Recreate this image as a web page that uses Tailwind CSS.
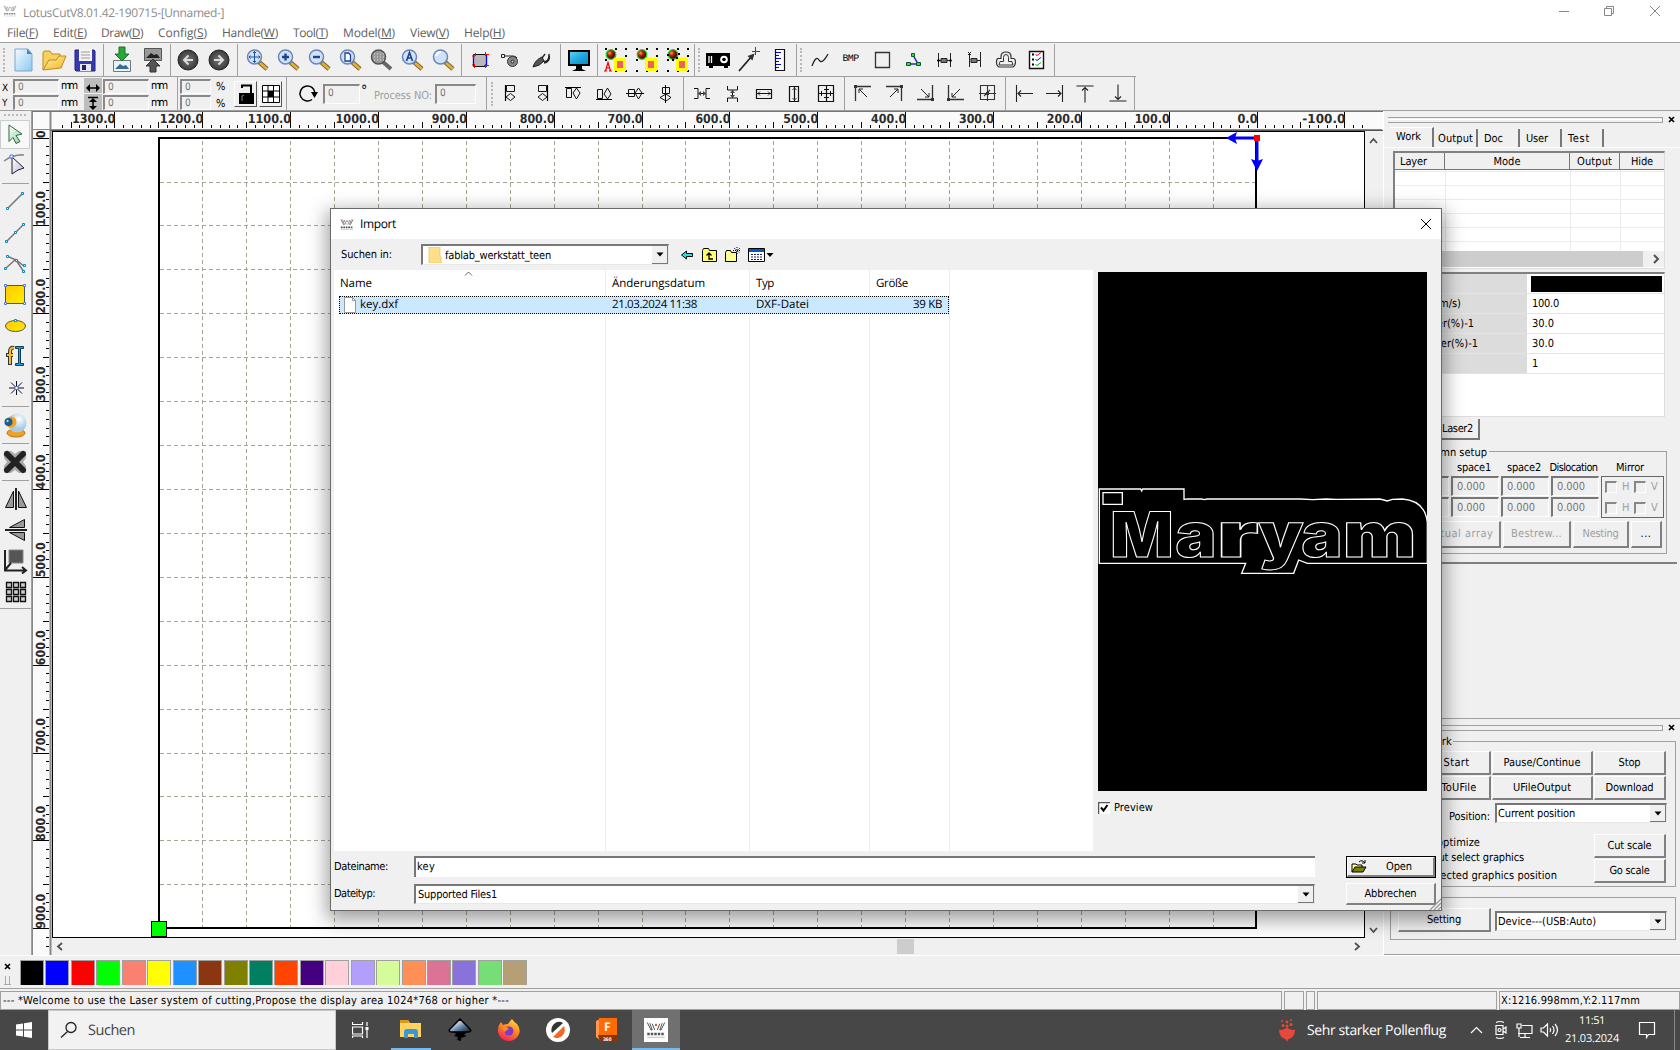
<!DOCTYPE html>
<html lang="de">
<head>
<meta charset="utf-8">
<title>LotusCutV8.01.42-190715-[Unnamed-]</title>
<script src="https://cdn.jsdelivr.net/npm/@tailwindcss/browser@4"></script>
</head>
<body class="w-[1680px] h-[1050px] overflow-hidden bg-[#f0f0f0] text-black font-['DejaVu_Sans_Condensed','DejaVu_Sans',sans-serif] text-[11px] leading-[14px] [text-rendering:geometricPrecision]">

<svg class="absolute w-0 h-0">
  <defs>
    <linearGradient id="gBlue" x1="0" y1="0" x2="1" y2="1"><stop offset="0" stop-color="#f4fbff"/><stop offset="1" stop-color="#8cc8f4"/></linearGradient>
    <linearGradient id="gYel" x1="0" y1="0" x2="1" y2="1"><stop offset="0" stop-color="#fff0a0"/><stop offset="1" stop-color="#f0b428"/></linearGradient>
    <linearGradient id="gGold" x1="0" y1="0" x2="1" y2="1"><stop offset="0" stop-color="#ffc800"/><stop offset="1" stop-color="#ffee00"/></linearGradient>
    <linearGradient id="gArr" x1="0" y1="0" x2="1" y2="1"><stop offset="0" stop-color="#fff"/><stop offset="1" stop-color="#8fcfa0"/></linearGradient>
    <linearGradient id="gLav" x1="0" y1="0" x2="1" y2="1"><stop offset="0" stop-color="#fff"/><stop offset="1" stop-color="#b4b8e0"/></linearGradient>
    <radialGradient id="gDark"><stop offset="0" stop-color="#777"/><stop offset="1" stop-color="#3a3a3a"/></radialGradient>
    <radialGradient id="gBall" cx=".35" cy=".35"><stop offset="0" stop-color="#ff9a6a"/><stop offset=".5" stop-color="#c02010"/><stop offset="1" stop-color="#501008"/></radialGradient>
    <radialGradient id="gCam" cx=".6" cy=".3"><stop offset="0" stop-color="#fff"/><stop offset="1" stop-color="#a8cce4"/></radialGradient>
    <linearGradient id="gMon" x1="0" y1="0" x2="1" y2="1"><stop offset="0" stop-color="#58d0f8"/><stop offset=".5" stop-color="#20a8e0"/><stop offset="1" stop-color="#1088c8"/></linearGradient>
    <linearGradient id="gFox" x1=".8" y1="0" x2=".3" y2="1"><stop offset="0" stop-color="#ffe040"/><stop offset=".5" stop-color="#ff8020"/><stop offset="1" stop-color="#f02060"/></linearGradient>
    <linearGradient id="gInk" x1="0" y1="0" x2="1" y2="1"><stop offset=".2" stop-color="#fff"/><stop offset=".6" stop-color="#6080a8"/><stop offset="1" stop-color="#101820"/></linearGradient>
  </defs>
  <symbol id="new" viewBox="0 0 28 28"><path d="M6 3h13l4 5v17H6z" fill="url(#gBlue)" stroke="#7aa6cc"/><path d="M18 3v5h5z" fill="#3f86cc"/></symbol>
  <symbol id="open" viewBox="0 0 28 28"><path d="M3 24V7q0-2 2-2h5l2 3h8v3" fill="#f8d060" stroke="#c08a18"/><path d="M3 24l6-10h7l3-4h7l-5 12z" fill="url(#gYel)" stroke="#c08a18"/></symbol>
  <symbol id="save" viewBox="0 0 28 28"><path d="M4 4h19l1 1v20H5l-1-1z" fill="#3a3ab0" stroke="#20207c"/><path d="M8 3h13v12H8z" fill="#f4f4f4"/><path d="M10 6h9M10 9h9M10 12h9" stroke="#999"/><path d="M9 18h11v7H9z" fill="#e8e8f0"/><path d="M11 19h4v5h-4z" fill="#20207c"/></symbol>
  <symbol id="imp" viewBox="0 0 28 28"><path d="M5.500 14.500h17v11h-17z" fill="#e8f4fc" stroke="#777"/><path d="M7 23l5-5 3 2 3-1 3 4z" fill="#3a6a90"/><path d="M11 1h6v7h4l-7 7-7-7h4z" fill="#28a838" stroke="#187028"/></symbol>
  <symbol id="exp" viewBox="0 0 28 28"><path d="M5.500 2.500h17v12h-17z" fill="#999" stroke="#555"/><path d="M7 12l5-5 3 2 3-1 3 4z" fill="#222"/><path d="M11 26h6v-6h4l-7-7-7 7h4z" fill="#555" stroke="#333"/></symbol>
  <symbol id="undo" viewBox="0 0 28 28"><circle cx="14" cy="14" r="10" fill="url(#gDark)" stroke="#222"/><path d="M19 14H10m4.500-4.500L10 14l4.500 4.500" stroke="#ddd" stroke-width="2" fill="none"/></symbol>
  <symbol id="redo" viewBox="0 0 28 28"><circle cx="14" cy="14" r="10" fill="url(#gDark)" stroke="#222"/><path d="M9 14h9m-4.500-4.500L18 14l-4.500 4.500" stroke="#ddd" stroke-width="2" fill="none"/></symbol>
  <symbol id="lens" viewBox="0 0 28 28"><path d="M16 16l8 7" stroke="#7a6440" stroke-width="4.500"/><path d="M17 17l7 6" stroke="#e8b030" stroke-width="2.500"/><circle cx="11.500" cy="11" r="7" fill="#cfe2fa" stroke="#6c86b8" stroke-width="1.500"/></symbol>
  <symbol id="zfit" viewBox="0 0 28 28"><use href="#lens"/><path d="M11.500 5.500v11M6 11h11M10 7l1.500-1.500L13 7M10 15l1.500 1.500L13 15M7.500 9.500L6 11l1.500 1.500M15.500 9.500L17 11l-1.500 1.500" stroke="#2050a0" fill="none"/></symbol>
  <symbol id="zin" viewBox="0 0 28 28"><use href="#lens"/><path d="M11.500 7.500v7M8 11h7" stroke="#1c4488" stroke-width="2.400"/></symbol>
  <symbol id="zout" viewBox="0 0 28 28"><use href="#lens"/><path d="M8 11h7" stroke="#1c4488" stroke-width="2.400"/></symbol>
  <symbol id="zpage" viewBox="0 0 28 28"><use href="#lens"/><path d="M9 7h3.500l2 2v6H9z" fill="#fff" stroke="#1c4488" stroke-width="1.300"/></symbol>
  <symbol id="zgrid" viewBox="0 0 28 28"><path d="M16 16l8 7" stroke="#666" stroke-width="4"/><circle cx="11.500" cy="11" r="7" fill="#999" stroke="#555" stroke-width="1.500"/><path d="M7 8h10M7 11h10M7 14h10" stroke="#ddd" stroke-dasharray="1 2"/></symbol>
  <symbol id="zall" viewBox="0 0 28 28"><use href="#lens"/><path d="M8.500 15l3-8.500 3 8.500M9.500 12h4" stroke="#1c4488" stroke-width="1.600" fill="none"/></symbol>
  <symbol id="zplain" viewBox="0 0 28 28"><use href="#lens"/><path d="M7 10q1-4 5-4" stroke="#fff" stroke-width="2" fill="none"/></symbol>
  <symbol id="cutbox" viewBox="0 0 28 28"><path d="M7.500 8.500h13v12h-13z" fill="#b8b8b8" stroke="#111"/><path d="M7.500 9v11M20.500 9v11" stroke="#00f" stroke-width="1.300"/><path d="M6 10h3M9.500 7v3M19.500 6v4M20 8.500h3M6 19h3M8.500 18v4M19.500 18v4M18 19.500h5" stroke="#f00"/></symbol>
  <symbol id="wheel" viewBox="0 0 28 28"><path d="M4.500 8.500h3v3h-3z" fill="none" stroke="#222"/><path d="M8 10h8q3 0 4 2" stroke="#222" fill="none"/><circle cx="15.500" cy="15.500" r="5" fill="#888" stroke="#333"/><circle cx="15.500" cy="15.500" r="1.500" fill="#ccc" stroke="#222"/></symbol>
  <symbol id="pen" viewBox="0 0 28 28"><path d="M5 21q2-7 9-10l2 4q-4 5-11 6z" fill="#555" stroke="#222"/><path d="M14 12l3-4M15 15q6 2 6-7M21 8q2 8-5 9" fill="none" stroke="#222" stroke-width="1.300"/></symbol>
  <symbol id="monitor" viewBox="0 0 28 28"><path d="M3 4h22v16H3z"/><path d="M5 6h18v12H5z" fill="url(#gMon)"/><path d="M11 20h6v3l4 2H7l4-2z"/></symbol>
  <symbol id="shapes" viewBox="0 0 28 28"><path d="M3 2h2v2H3zM13 2h2v2h-2zM23 2h2v2h-2zM3 13h2v2H3zM23 9h2v2h-2zM3 24h2v2H3zM13 24h2v2h-2zM23 24h2v2h-2z"/><circle cx="9" cy="8.500" r="4.800" fill="url(#gBall)" stroke="#28c828" stroke-width="1.300"/><path d="M13.500 13.500h9v10h-9z" fill="#f06060" stroke="#ff0" stroke-width="3"/></symbol>
  <symbol id="shapesA" viewBox="0 0 28 28"><use href="#shapes"/><path d="M2 15h8v12H2z" fill="#f0f0f0"/><path d="M3.500 25L6 16.500 8.500 25M4.500 22h3M2 25h3M7 25h3" stroke="#e00" stroke-width="1.200" fill="none"/></symbol>
  <symbol id="shapesB" viewBox="0 0 28 28"><use href="#shapes"/><path d="M12 11h2v2h-2zM3 8h2v2H3zM8 13h2v2H8zM14 7h2v2h-2z"/></symbol>
  <symbol id="proj" viewBox="0 0 28 28"><path d="M2 7h24v13h-2v2h-4v-2H9v2H5v-2H2z"/><path d="M5 10v7M7.500 10v7" stroke="#fff" stroke-width="1.300"/><circle cx="20" cy="13.500" r="3.800" fill="#fff"/><circle cx="20" cy="13.500" r="1.800"/></symbol>
  <symbol id="ptr" viewBox="0 0 28 28"><path d="M4 25L17 10" stroke="#222" stroke-width="1.800"/><path d="M19.500 7.500l-2 7-5-4.500z" fill="#333"/><path d="M20.500 1v8M17 5.500h8" stroke="#444"/></symbol>
  <symbol id="rule" viewBox="0 0 28 28"><path d="M9.500 3.500h9v21h-9z" fill="#fff" stroke="#111" stroke-width="1.200"/><path d="M10 6.500h5M10 9.500h3M10 12.500h5M10 15.500h3M10 18.500h5M10 21.500h3" stroke="#00e"/></symbol>
  <symbol id="curve" viewBox="0 0 28 28"><path d="M6 20q4-11 7-6t9-6" fill="none" stroke="#222" stroke-width="1.300"/></symbol>
  <symbol id="rect" viewBox="0 0 28 28"><path d="M7.500 6.500h14v15h-14z" fill="none" stroke="#333" stroke-width="1.300"/></symbol>
  <symbol id="nodes" viewBox="0 0 28 28"><path d="M14 9l5 9H8" stroke="#22d" stroke-width="1.500" fill="none"/><path d="M12.500 7.500h3v3h-3zM7.500 16.500h4v3h-4zM17.500 16.500h4v3h-4z" fill="#2e2" stroke="#153"/></symbol>
  <symbol id="distA" viewBox="0 0 28 28"><path d="M8.500 7v14M20.500 7v14M7 14.500h14" stroke="#222"/><path d="M11 12.500h6v4h-6z" fill="#777" stroke="#222"/><path d="M7 14.500l1.500-2 1.500 2-1.500 2zM19 14.500l1.500-2 1.500 2-1.500 2z"/></symbol>
  <symbol id="distB" viewBox="0 0 28 28"><path d="M8.500 8v13M19.500 6v15M7 6l3 3M10 6L7 9" stroke="#222"/><path d="M10 12.500h6v4h-6z" fill="#777" stroke="#222"/><path d="M16 14.500h3" stroke="#222"/></symbol>
  <symbol id="stamp" viewBox="0 0 28 28"><path d="M9 10.500q0-4.500 5-4.500t5 4.500v2h2q2.500 0 2.500 3.500t-2.500 5H7q-2.500-1-2.500-5t2.500-3.500h2z" fill="none" stroke="#333" stroke-width="1.200"/><path d="M7 19l1-3.500h3.500v-4q0-3 2.500-3t2.500 3v4H20l1 3.500z" fill="none" stroke="#333"/></symbol>
  <symbol id="list" viewBox="0 0 28 28"><path d="M6.500 5.500h14v17h-14z" fill="#fff" stroke="#111" stroke-width="1.400"/><path d="M9 8.500h2M9 13.500h2M9 18.500h2" stroke="#000" stroke-width="2"/><path d="M12.500 8.500l1.500 1 4-3" fill="none" stroke="#e00"/><path d="M12.500 13.500l1.500 1 4-3" fill="none" stroke="#00e"/><path d="M12.500 18.500l1.500 1 4-3" fill="none" stroke="#0a0"/></symbol>
  <symbol id="al" viewBox="0 0 28 28"><path d="M8.500 6v16" stroke="#000" stroke-width="1.200"/><path d="M9.500 6.500h8v6h-8zM9 18l4.500-3.500L18 18l-4.500 3.500z" fill="none" stroke="#111"/></symbol>
  <symbol id="at" viewBox="0 0 28 28"><path d="M6 8.500h16" stroke="#000"/><path d="M7.500 9.500h5v9h-5zM17.500 9l3.500 5-3.500 6-3.500-6z" fill="none" stroke="#111"/></symbol>
  <symbol id="ac" viewBox="0 0 28 28"><path d="M5 14.500h18" stroke="#000"/><path d="M7.500 10.500h6v7h-6zM17.500 9l3.500 5-3.500 6-3.500-6z" fill="none" stroke="#111"/></symbol>
  <symbol id="sp" viewBox="0 0 28 28"><path d="M6 9.500h4v10H6M22 9.500h-4v10h4M10 14.500h8" fill="none" stroke="#111"/><path d="M13 12v5l-3-2.500zM15 12v5l3-2.500z" fill="#444"/></symbol>
  <symbol id="same" viewBox="0 0 28 28"><path d="M6.500 10.500h15v9h-15zM6 14.500h16" fill="none" stroke="#111" stroke-width="1.200"/><path d="M10 12.500l-2 2 2 2M18 12.500l2 2-2 2" fill="none" stroke="#333"/></symbol>
  <symbol id="sameb" viewBox="0 0 28 28"><path d="M6.500 6.500h15v16h-15zM6 14.500h16M14.500 6v17" fill="none" stroke="#111" stroke-width="1.200"/><path d="M9.500 12v5M18.500 12v5M12 10.500h5M12 18.500h5" stroke="#111"/></symbol>
  <symbol id="cor" viewBox="0 0 28 28"><path d="M6.500 22V7.500H22" fill="none" stroke="#333" stroke-width="1.300"/><path d="M10 10l8 8M10 10v4M10 10h4" fill="none" stroke="#222"/><path d="M5 6h3v3H5z" fill="#333"/></symbol>
  <symbol id="cen" viewBox="0 0 28 28"><path d="M7.500 6.500h14v14h-14zM14.500 6v16M6 14.500h17M11 17l6-6" fill="none" stroke="#333" stroke-width="1.100"/><path d="M13 13h3v3h-3z" fill="#333"/></symbol>
  <symbol id="edge" viewBox="0 0 28 28"><path d="M6.500 6v17M8 14.500h15M11 11.500l-3 3 3 3" fill="none" stroke="#222" stroke-width="1.100"/></symbol>
  <symbol id="logo" viewBox="0 0 16 14"><path d="M1 1l3 6h1L3 1.500M5 2l2 5M11 2L9 7M15 1l-3 6h-1l2-5.500" fill="none" stroke="#555" stroke-width=".8"/><circle cx="8" cy="3" r="1" fill="#e06030"/><path d="M1 10.200h14" stroke="#555" stroke-width="2" stroke-dasharray="2 .8"/><path d="M1 12.800h14" stroke="#aaa" stroke-width=".6"/></symbol>
  <symbol id="tri" viewBox="0 0 8 5"><path d="M.5.500h7L4 4.500z"/></symbol>
</svg>

<div class="flex flex-col w-[1680px] h-[1050px]">

  <!-- title bar and menu -->
  <header class="h-[43px] bg-white border-b border-[#a0a0a0] shrink-0 font-['Open_Sans',sans-serif] text-[12px]">
    <div class="h-[22px] flex items-center">
      <svg class="w-[14px] h-[12px] ml-[3px] opacity-70"><use href="#logo"/></svg>
      <span class="ml-[6px] mt-[3px] text-[#8c8c8c]" data-w="201">LotusCutV8.01.42-190715-[Unnamed-]</span>
      <svg class="ml-auto w-[108px] h-[14px] mr-[17px]" viewBox="0 0 108 14" fill="none" stroke="#888"><path d="M4 7.500h10M49.500 4.500h7v7h-7zM51.500 4V2.500h7v7H57M95 2l10 10M105 2L95 12"/></svg>
    </div>
    <nav class="flex h-[20px] items-center text-[#606060] pl-[7px] pt-[2px]">
      <span class="w-[46px]"><span data-w="31">File(<u>F</u>)</span></span><span class="w-[48px]"><span data-w="34">Edit(<u>E</u>)</span></span><span class="w-[57px]"><span data-w="42">Draw(<u>D</u>)</span></span><span class="w-[64px]"><span data-w="49">Config(<u>S</u>)</span></span><span class="w-[71px]"><span data-w="56">Handle(<u>W</u>)</span></span><span class="w-[50px]"><span data-w="35">Tool(<u>T</u>)</span></span><span class="w-[67px]"><span data-w="52">Model(<u>M</u>)</span></span><span class="w-[54px]"><span data-w="39">View(<u>V</u>)</span></span><span><span data-w="41">Help(<u>H</u>)</span></span>
    </nav>
  </header>

  <!-- toolbars -->
  <div id="bar1" class="flex h-[33px] pt-[1px] items-center shrink-0 w-[1136px]"></div>
  <div class="flex h-[34px] items-center shrink-0 border-t border-[#a0a0a0] w-[1136px]">
    <div class="flex w-[484px] h-full items-center">
      <div class="w-[13px] pl-[2px] pt-[5px] text-[10px] leading-[15px] flex flex-col"><span>X</span><span>Y</span></div>
      <div class="w-[46px] pt-[2px] flex flex-col gap-px"><div class="fld">0</div><div class="fld">0</div></div>
      <div class="w-[25px] pl-[2px] pt-px text-[11px] leading-[17px] flex flex-col items-start"><span data-w="15">mm</span><span data-w="15">mm</span></div>
      <div class="w-[18px] h-[32px] bg-[#bdbdbd] flex flex-col"><svg class="w-[18px] h-[32px]" viewBox="0 0 18 32"><path d="M4 10h10" stroke="#000" stroke-width="1.500"/><path d="M2 10l4-4v8zM16 10l-4-4v8zM9 20l4 4H5zM9 32l4-4H5z"/><path d="M9 22v8M4 19.500h10" stroke="#000" stroke-width="1.500"/><path d="M0 15.500h18" stroke="#eee"/></svg></div>
      <div class="w-[47px] pl-px pt-[2px] flex flex-col gap-px"><div class="fld">0</div><div class="fld">0</div></div>
      <div class="w-[28px] pl-[2px] pt-px text-[11px] leading-[17px] flex flex-col items-start"><span data-w="15">mm</span><span data-w="15">mm</span></div>
      <div class="w-px h-full bg-[#a0a0a0]"></div>
      <div class="w-[33px] pl-[2px] pt-[2px] flex flex-col gap-px"><div class="fld">0</div><div class="fld">0</div></div>
      <div class="w-[23px] pl-[5px] pt-[2px] text-[11px] leading-[17px] flex flex-col"><span>%</span><span>%</span></div>
      <div class="w-[23px] h-[26px] mr-[2px] border border-t-white border-l-white border-r-[#555] border-b-[#555]"><svg class="w-[21px] h-[24px]" viewBox="0 0 21 24"><path d="M5 12h13v9H5z" stroke="#000" stroke-width="2"/><path d="M7 6V3.500h9V12" fill="none" stroke="#000" stroke-width="2"/><path d="M7 19v-5l2-1" stroke="#888" fill="none"/></svg></div>
      <div class="w-[23px] h-[26px] border border-t-white border-l-white border-r-[#555] border-b-[#555]"><svg class="w-[21px] h-[24px]" viewBox="0 0 21 24"><path d="M2.500 3.500h17v17h-17zM8 3v18M13.500 3v18M2 9h18M2 15h18" fill="#fff" stroke="#000"/><path d="M8 9h6v6H8z"/></svg></div>
      <div class="ml-[4px] w-px h-full bg-[#a0a0a0]"></div>
      <svg class="w-[20px] h-[20px] ml-[11px]" viewBox="0 0 20 20"><path d="M14 15.500A7.500 7.500 0 1 1 17 9" fill="none" stroke="#000" stroke-width="1.500"/><path d="M13 8h7l-3.500 6z"/></svg>
      <div class="fldb ml-[5px] w-[37px]">0</div><span class="mb-[6px] ml-px w-[13px] text-[14px]">°</span>
      <span class="text-[#a0a0a0] w-[61px] mt-[5px]"><span data-w="58">Process NO:</span></span><div class="fldb w-[41px]">0</div>
    </div>
    <div id="bar2" class="flex h-full items-center"></div>
  </div>

  <!-- workspace -->
  <main class="flex h-[845px] shrink-0 border-t border-[#a0a0a0]">
    <aside class="w-[32px] shrink-0 border-r border-[#a0a0a0] relative">
      <svg class="w-[31px] h-[500px]" viewBox="0 111 31 500">
        <path d="M4 115h22" stroke="#bbb" stroke-width="2" stroke-dasharray="2 2"/>
        <path d="M.5 120.500h29v28H.5z" fill="#f8f8f8" stroke="#ccc"/>
        <path d="M9 125l13 9-6 1.500 4 6-4 2-3-6-4 4z" fill="url(#gArr)" stroke="#2a6a3c"/>
        <path d="M4 161q10-7 20-6" fill="none" stroke="#888" stroke-width="1.500"/><path d="M12 157l12 11-6 2-6 4z" fill="url(#gLav)" stroke="#222"/><path d="M10 155h3v3h-3z" fill="#fff" stroke="#4a7ae0"/>
        <path d="M2 183.500h27M2 406.500h27M2 443.500h27M2 480.500h27M0 608.500h31" stroke="#a0a0a0"/>
        <path d="M7.500 208.500l15-15M6.500 241.500l17-17M5.500 268.500l10-9 9 7M7 256l9 4 8 12" fill="none" stroke="#777" stroke-width="1.500"/>
        <g fill="#fff" stroke="#0a88c0"><path d="M6.500 207.500h2v2h-2zM21.500 192.500h2v2h-2zM5.500 240.500h2v2h-2zM14.500 231.500h2v2h-2zM22.500 223.500h2v2h-2zM6.500 255.500h2v2h-2zM15.500 259.500h2v2h-2zM4.500 267.500h2v2h-2zM23.500 264.500h2v2h-2zM22.500 270.500h2v2h-2z"/></g>
        <path d="M5.500 285.500h19v18h-19z" fill="url(#gGold)" stroke="#555"/><g fill="#fff" stroke="#4a7ae0"><path d="M4.500 284.500h2v2h-2zM23.500 284.500h2v2h-2zM4.500 302.500h2v2h-2zM23.500 302.500h2v2h-2z"/></g>
        <ellipse cx="15.500" cy="326" rx="10" ry="5.500" fill="url(#gGold)" stroke="#555"/><path d="M14.500 319.500h2v2h-2z" fill="#fff" stroke="#0a88c0"/>
        <path d="M14 348q-4-1-4 4v13M6 355h7" fill="none" stroke="#333" stroke-width="4"/><path d="M14 348q-4-1-4 4v12M7 355h6" fill="none" stroke="#f4c020" stroke-width="2"/>
        <path d="M15.500 346.500h8v2h-3v15h3v2h-8v-2h3v-15h-3z" fill="#28a0e0" stroke="#0a3c60"/>
        <path d="M16.500 381v14M9 388h15M11 382.500l11 11M22 382.500l-11 11" stroke="#111"/><path d="M15 386.500h3v3h-3z" fill="#fff" stroke="#4a7ae0"/>
        <ellipse cx="16" cy="433" rx="9" ry="4" fill="#f4a020" stroke="#c07010"/><circle cx="17" cy="423" r="9.500" fill="url(#gCam)"/><circle cx="11" cy="422" r="5.500" fill="#f4a020"/><circle cx="8.500" cy="422" r="4" fill="#1c5c90"/><circle cx="7.500" cy="421" r="1.200" fill="#9ad0f4"/>
        <path d="M4 451h22v22H4z" fill="#aaa"/><path d="M4 458l3 4-3 4zM26 458l-3 4 3 4zM11 451l4 3 4-3zM11 473l4-3 4 3z" fill="#f0f0f0"/><path d="M7 454l16 16M23 454L7 470" stroke="#222" stroke-width="6" stroke-linecap="round"/>
        <path d="M16 488v22" stroke="#222" stroke-width="2"/><path d="M13.500 491v16.500h-8zM18.500 491v16.500h8z" fill="#999" stroke="#111"/>
        <path d="M5 530h22" stroke="#222" stroke-width="2"/><path d="M24.500 519.500v8h-15zM24.500 540.500v-8h-15z" fill="#999" stroke="#111"/>
        <path d="M9 550h14v13H9z" fill="#555" stroke="#888"/><path d="M5 550v20M4 570.500h21M5 570l6-7M22 567l4 3.500-4 3" fill="none" stroke="#222" stroke-width="2"/>
        <g fill="#ccc" stroke="#111" stroke-width="1.300"><path d="M6.500 582.500h5v5h-5zM13.500 582.500h5v5h-5zM20.500 582.500h5v5h-5zM6.500 589.500h5v5h-5zM13.500 589.500h5v5h-5zM20.500 589.500h5v5h-5zM6.500 596.500h5v5h-5zM13.500 596.500h5v5h-5zM20.500 596.500h5v5h-5z"/></g>
      </svg>
    </aside>
    <svg id="canvas" class="w-[1351px] h-[844px] shrink-0" viewBox="32 111 1351 844"></svg>

    <!-- right docks -->
    <section class="flex flex-col w-[297px] border-l border-white shrink-0">
      <div class="flex items-center h-[17px] pl-[4px]"><div class="h-[6px] w-[275px] border-y border-r border-[#a0a0a0] flex items-center"><div class="w-full h-px bg-white"></div></div><svg class="w-[7px] h-[7px] ml-[5px]" viewBox="0 0 7 7"><path d="M1 1l5 5M6 1L1 6" stroke="#000" stroke-width="1.700"/></svg></div>
      <div class="flex items-end h-[20px] pl-[6px] border-b border-white">
        <div class="w-[44px] h-[20px] border-r-2 border-[#777] border-t border-t-white pl-[6px] pt-[2px]"><span data-w="25">Work</span></div>
        <div class="w-[44px] h-[18px] border-r-2 border-[#777] pl-[4px] pt-[3px]"><span data-w="35">Output</span></div>
        <div class="w-[42px] h-[18px] border-r-2 border-[#777] pl-[6px] pt-[3px]"><span data-w="19">Doc</span></div>
        <div class="w-[42px] h-[18px] border-r-2 border-[#777] pl-[6px] pt-[3px]"><span data-w="22">User</span></div>
        <div class="w-[42px] h-[18px] border-r-2 border-[#777] pl-[6px] pt-[3px]"><span data-w="22">Test</span></div>
      </div>
      <div class="ml-[9px] mt-[3px] w-[272px] h-[118px] bg-white border-t-2 border-l-2 border-r border-b border-t-[#808080] border-l-[#808080] border-[#ddd] flex flex-col">
        <div class="flex h-[17px] bg-[#f0f0f0] border-b border-[#777] leading-[17px] shrink-0">
          <div class="w-[50px] border-r border-[#777] pl-[5px]"><span data-w="27">Layer</span></div><div class="w-[125px] border-r border-[#777] text-center"><span data-w="27">Mode</span></div><div class="w-[50px] border-r border-[#777] text-center"><span data-w="35">Output</span></div><div class="flex-1 text-center"><span data-w="22">Hide</span></div>
        </div>
        <svg class="w-[269px] h-[81px]" viewBox="0 0 269 81"><path d="M0 1.500h269M0 15.500h269M0 29.500h269M0 43.500h269M0 57.500h269M0 71.500h269M50.500 0v81M175.500 0v81M225.500 0v81" stroke="#ececec"/></svg>
        <div class="h-[16px] flex"><div class="w-[248px] bg-[#cdcdcd]"></div><svg class="w-[21px] h-[16px] bg-[#f0f0f0]" viewBox="0 0 21 16"><path d="M11 4l4 4-4 4" fill="none" stroke="#505050" stroke-width="2"/></svg></div>
      </div>
      <div class="ml-[9px] mt-[3px] w-[272px] h-[145px] bg-white border-t-2 border-r border-b border-t-[#808080] border-[#ddd] flex flex-col text-[11px]">
        <div class="prow"><div class="plab"></div><div class="flex-1 pl-[4px] pr-[2px] pt-[2px]"><div class="h-[16px] bg-black"></div></div></div>
        <div class="prow"><div class="plab pr-[66px]"><span>Speed(mm/s)</span></div><div class="pval"><span data-w="27">100.0</span></div></div>
        <div class="prow"><div class="plab pr-[53px]"><span>Max power(%)-1</span></div><div class="pval"><span data-w="22">30.0</span></div></div>
        <div class="prow"><div class="plab pr-[49px]"><span>Min power(%)-1</span></div><div class="pval"><span data-w="22">30.0</span></div></div>
        <div class="prow"><div class="plab"></div><div class="pval">1</div></div>
      </div>
      <div class="ml-[40px] mt-[2px] w-[56px] h-[21px] border-r-2 border-b-2 border-[#777] text-right pr-[5px] pt-[3px]"><span data-w="31">Laser2</span></div>
      <div class="ml-[10px] mt-[11px] w-[273px] h-[103px] border border-[#a0a0a0] flex flex-col">
        <div class="-mt-[6px] w-[94px] bg-[#f0f0f0] text-right pr-[2px] h-[14px] whitespace-nowrap flex justify-end"><span>Row column setup</span></div>
        <div class="flex h-[15px] mt-px pl-[54px]"><div class="w-[50px] text-center"><span data-w="34">space1</span></div><div class="w-[50px] text-center"><span data-w="34">space2</span></div><div class="w-[49px] text-center"><span data-w="48">Dislocation</span></div><div class="w-[64px] text-center"><span data-w="28">Mirror</span></div></div>
        <div class="flex gap-[2px] h-[42px]">
          <div class="ml-[9px] w-[45px] flex flex-col gap-px"><div class="sp"></div><div class="sp"></div></div>
          <div class="w-[48px] flex flex-col gap-px"><div class="sp"><span data-w="28">0.000</span></div><div class="sp"><span data-w="28">0.000</span></div></div>
          <div class="w-[48px] flex flex-col gap-px"><div class="sp"><span data-w="28">0.000</span></div><div class="sp"><span data-w="28">0.000</span></div></div>
          <div class="w-[48px] flex flex-col gap-px"><div class="sp"><span data-w="28">0.000</span></div><div class="sp"><span data-w="28">0.000</span></div></div>
          <div class="w-[63px] border border-[#666] grid grid-cols-2 gap-y-[6px] pl-[3px] pt-[3px] pb-[2px] text-[#a0a0a0]">
            <div class="flex items-center gap-[5px]"><i class="cb"></i>H</div><div class="flex items-center gap-[5px]"><i class="cb"></i>V</div><div class="flex items-center gap-[5px]"><i class="cb"></i>H</div><div class="flex items-center gap-[5px]"><i class="cb"></i>V</div>
          </div>
        </div>
        <div class="flex gap-[2px] mt-[3px] h-[27px] text-[#a0a0a0]"><div class="btn ml-[23px] w-[83px]"><span class="ml-px" data-w="68">Virtual array</span></div><div class="btn w-[68px]"><span data-w="51">Bestrew...</span></div><div class="btn w-[56px]"><span data-w="36">Nesting</span></div><div class="btn w-[31px] text-black"><span data-w="11">...</span></div></div>
      </div>
      <div class="mt-[8px] h-[2px] w-[293px] bg-[#808080]"></div>
      <div class="mt-[154px] h-px bg-[#a0a0a0] shrink-0"></div>
      <div class="flex items-center h-[16px] pl-[4px] shrink-0"><div class="h-[6px] w-[275px] border-y border-r border-[#a0a0a0] mt-[1px]"></div><svg class="w-[7px] h-[7px] ml-[5px]" viewBox="0 0 7 7"><path d="M1 1l5 5M6 1L1 6" stroke="#000" stroke-width="1.700"/></svg></div>
      <div class="ml-[6px] mt-[6px] w-[286px] h-[146px] border border-[#a0a0a0] flex flex-col shrink-0">
        <div class="-mt-[7px] w-[60px] bg-[#f0f0f0] text-right pr-px h-[14px] ml-[2px]"><span data-w="26">Work</span></div>
        <div class="flex gap-px mt-[2px] h-[24px]"><div class="btn ml-[7px] w-[93px] pl-[25px]"><span data-w="26">Start</span></div><div class="btn w-[101px]"><span data-w="77">Pause/Continue</span></div><div class="btn w-[72px]"><span data-w="22">Stop</span></div></div>
        <div class="flex gap-px mt-[1px] h-[24px]"><div class="btn ml-[7px] w-[93px] pl-[5px]"><span data-w="60">SaveToUFile</span></div><div class="btn w-[101px]"><span data-w="58">UFileOutput</span></div><div class="btn w-[72px]"><span data-w="48">Download</span></div></div>
        <div class="flex mt-[3px] h-[20px]"><span class="ml-[58px] mt-[7px] w-[46px]"><span data-w="41">Position:</span></span><div class="cmb w-[172px]"><span data-w="77">Current position</span><b class="cmbb"><svg class="w-[8px] h-[5px]"><use href="#tri"/></svg></b></div></div>
        <div class="flex mt-[11px]">
          <div class="w-[203px] flex flex-col whitespace-nowrap">
            <div class="w-[89px] flex justify-end mt-[2px]"><span data-w="68">Path optimize</span></div><div class="w-[133px] flex justify-end mt-px"><span data-w="116">Only cut select graphics</span></div><div class="w-[166px] flex justify-end mt-[4px]"><span data-w="132">Selected graphics position</span></div>
          </div>
          <div class="flex flex-col gap-px w-[72px]"><div class="btn h-[24px]"><span data-w="44">Cut scale</span></div><div class="btn h-[24px]"><span data-w="40">Go scale</span></div></div>
        </div>
      </div>
      <div class="ml-[6px] mt-[10px] w-[286px] h-[43px] border border-[#a0a0a0] flex items-center shrink-0"><div class="btn ml-[7px] w-[93px] h-[24px] mt-[3px]"><span data-w="34">Setting</span></div><div class="cmb ml-[4px] w-[172px] h-[20px] mt-[5px]"><span data-w="98">Device---(USB:Auto)</span><b class="cmbb"><svg class="w-[8px] h-[5px]"><use href="#tri"/></svg></b></div></div>
      <div class="mt-auto h-px bg-[#a0a0a0]"></div>
    </section>
  </main>

  <!-- palette -->
  <div class="flex h-[34px] shrink-0 border-t border-white pt-[3px] border-b border-b-[#a0a0a0]">
    <div class="w-[20px] flex flex-col items-center pt-[4px] pr-[6px] gap-[6px]"><svg class="w-[7px] h-[7px]" viewBox="0 0 7 7"><path d="M1 1l5 5M6 1L1 6" stroke="#000" stroke-width="1.700"/></svg><svg class="w-[7px] h-[9px]" viewBox="0 0 7 9"><path d="M1.500 0v8.500h4V0M0 8.500h7" fill="none" stroke="#aaa"/></svg></div>
    <div id="palette" class="flex"></div>
  </div>

  <!-- status bar -->
  <div class="flex h-[21px] pt-[2px] gap-[2px] shrink-0">
    <div class="w-[1282px] border border-[#a0a0a0] pl-[2px] pt-[2px]"><span data-w="506">--- *Welcome to use the Laser system of cutting,Propose the display area 1024*768 or higher *---</span></div><div class="w-[20px] border border-[#a0a0a0]"></div><div class="w-[9px] border border-[#a0a0a0]"></div><div class="w-[180px] border border-[#a0a0a0]"></div><div class="flex-1 border border-[#a0a0a0] pl-px pt-[2px] text-[11px]"><span data-w="139">X:1216.998mm,Y:2.117mm</span></div>
  </div>

  <!-- taskbar -->
  <footer class="flex h-[40px] mt-auto shrink-0 bg-[#474747] items-center text-white font-['Open_Sans',sans-serif]">
    <div class="w-[48px] flex justify-center"><svg class="w-[16px] h-[16px]" viewBox="0 0 16 16" fill="#fff"><path d="M0 2.500L7 1.500v6H0zM8 1.300L16 0v7.500H8zM0 8.500h7v6L0 13.500zM8 8.500h8V16l-8-1.200z"/></svg></div>
    <div class="w-[288px] h-[40px] bg-[#f2f2f2] border border-[#c8c8c8] flex items-center"><svg class="w-[18px] h-[18px] ml-[11px]" viewBox="0 0 18 18" fill="none" stroke="#222" stroke-width="1.300"><circle cx="11" cy="6.500" r="5"/><path d="M7.500 10.500L1 16.500"/></svg><span class="ml-[10px] mt-px text-[14.500px] text-[#444]" data-w="47">Suchen</span></div>
    <div class="w-[50px] flex justify-center"><svg class="w-[17px] h-[16px] mr-[2px]" viewBox="0 0 17 16" fill="none" stroke="#fff" stroke-width="1.200"><path d="M.5 0v2.500h10V0M.5 5h10v7H.5zM.5 16v-2h10v2M15 0v4M15 8v8"/><path d="M13.500 5h3v3h-3z" fill="#fff" stroke="none"/></svg></div>
    <div class="w-[50px] h-full flex flex-col items-center justify-end"><svg class="w-[24px] h-[20px] mb-[9px]" viewBox="0 0 24 20"><path d="M1 1h8l2 3h11v14H1z" fill="#ffd45e"/><path d="M1 1h8l1 3H1z" fill="#d89a18"/><path d="M5 19v-6q0-3 3-3h8q3 0 3 3v6h-4v-4H9v4z" fill="#3a96dc"/></svg><div class="h-[2px] w-[40px] bg-[#76b9ed]"></div></div>
    <div class="w-[48px] flex justify-center"><svg class="w-[24px] h-[24px]" viewBox="0 0 24 24"><path d="M12 1l10 10q2 2-1 3H3q-3-1-1-3z" fill="url(#gInk)" stroke="#000" stroke-width="1.500"/><path d="M5 14l14 0-3 3 3 1-6 2 0 3-4-1 1-3-4-1 2-2z"/></svg></div>
    <div class="w-[49px] flex justify-center"><svg class="w-[24px] h-[24px]" viewBox="0 0 24 24"><path d="M15 1q2 3 5 5 4 5 2 10-3 7-10 7T2 17Q-1 10 4 4l2 3q2-1 5-1 2-3 4-5z" fill="url(#gFox)"/><circle cx="12" cy="13" r="4.500" fill="#7a3cc8"/><path d="M5 9q4-1 7 2-3 1-4 3-3-2-3-5z" fill="#ff9020"/></svg></div>
    <div class="w-[49px] flex justify-center"><svg class="w-[24px] h-[24px]" viewBox="0 0 24 24"><circle cx="12" cy="12" r="12" fill="#fff"/><path d="M6 15Q4 10 8 6q4-4 9-1z" fill="#333"/><path d="M7 19Q13 22 17 17q3-4 1-9z" fill="#f06a24"/></svg></div>
    <div class="w-[50px] flex justify-center"><svg class="w-[22px] h-[24px]" viewBox="0 0 22 24"><path d="M0 3l4-2v21l-4-3z" fill="#ff9a50"/><path d="M3 0h18v17H3z" fill="#ff6b00"/><path d="M2 17h20v7H4z" fill="#8a3400"/><text x="8" y="13" font-size="12" font-weight="700" fill="#fff">F</text><text x="7" y="22.500" font-size="5" font-weight="700" fill="#fff">360</text></svg></div>
    <div class="w-[48px] h-full bg-[#707070] flex flex-col items-center justify-end"><div class="w-[24px] h-[24px] bg-white mb-[6px] flex items-center justify-center"><svg class="w-[20px] h-[18px]"><use href="#logo"/></svg></div><div class="h-[2px] w-full bg-[#76b9ed]"></div></div>
    <div class="ml-auto flex items-center h-full">
      <svg class="w-[18px] h-[24px] mr-[11px]" viewBox="0 0 18 24" fill="#e8483c"><path d="M9 24l-1-2.500q-7-2-7-10 4 1.500 8-2 4 3.500 8 2 0 8-7 10z"/><circle cx="5" cy="7.500" r="1.500"/><circle cx="13" cy="6.500" r="1.500"/><circle cx="9" cy="4" r="1.500"/><circle cx="9" cy="8" r="1.500"/><circle cx="4" cy="3" r="1"/><circle cx="13" cy="2" r="1"/></svg>
      <span class="text-[14px] w-[162px] mt-px"><span data-w="139">Sehr starker Pollenflug</span></span>
      <svg class="w-[94px] h-[20px]" viewBox="0 0 94 20" fill="none" stroke="#fff" stroke-width="1.200"><path d="M2 13l5.500-5.500L13 13"/><path d="M27 5.500h7v9h-7zM34 9l3-2v6l-3-2M27 2.500q4-2 8 0M27 17.500q4 2 8 0"/><circle cx="30.500" cy="10" r="1.500"/><path d="M53 5.500h10v8H49M56 14v3M51 17.500h10M48 4h4v4h-4zM50 8v9"/><path d="M72 8h2.500l4-4v12l-4-4H72zM81 8q1.500 2 0 4M83.500 6q3 4 0 8M86 4q5 6 0 12"/></svg>
      <div class="w-[76px] -ml-[9px] text-[11px] leading-[18px] flex flex-col items-center"><span data-w="26">11:51</span><span data-w="54">21.03.2024</span></div>
      <svg class="w-[18px] h-[18px] ml-[8px]" viewBox="0 0 18 18" fill="none" stroke="#fff" stroke-width="1.200"><path d="M1.500 1.500h15v12h-6l-2 3v-3h-7z"/></svg>
      <div class="w-px h-full bg-[#888] ml-[18px] mr-[5px]"></div>
    </div>
  </footer>
</div>

<!-- import dialog -->
<div class="absolute left-[330px] top-[208px] w-[1112px] h-[703px] border border-[#6a6a6a] bg-[#f0f0f0] shadow-[0_6px_18px_3px_rgba(0,0,0,0.38)] flex flex-col">
  <div class="h-[30px] bg-white flex items-center pl-[9px] shrink-0"><svg class="w-[14px] h-[13px]"><use href="#logo"/></svg><span class="ml-[6px] text-[12px] font-['Open_Sans',sans-serif]" data-w="36">Import</span><svg class="ml-auto mr-[9px] w-[12px] h-[12px]" viewBox="0 0 12 12"><path d="M1 1l10 10M11 1L1 11" stroke="#000"/></svg></div>
  <div class="flex h-[31px] items-center pl-[10px] shrink-0"><span class="w-[80px]"><span data-w="51">Suchen in:</span></span>
    <div class="cmb w-[248px] h-[21px]"><svg class="w-[14px] h-[16px] ml-[4px] mr-[3px]" viewBox="0 0 14 16"><path d="M1 0h11v10h1v6H1z" fill="#ffe08a" stroke="#e8c050" stroke-width=".7"/></svg><span class="mt-px" data-w="106">fablab_werkstatt_teen</span><b class="cmbb"><svg class="w-[8px] h-[5px]"><use href="#tri"/></svg></b></div>
    <svg class="w-[96px] h-[18px] ml-[11px]" viewBox="0 0 96 18"><path d="M1.500 9l5-4v2.500h6v3h-6V13z" fill="#20e0e8" stroke="#000"/><path d="M22.500 4.500l1-2h5l1 2h7v11h-14z" fill="#ffff70" stroke="#000"/><path d="M29 7v6h4M26.500 9.500L29 7l2.500 2.500" fill="none" stroke="#000" stroke-width="1.300"/><path d="M45.500 6.500l1-2h4l1 2h5v9h-11z" fill="#ffff90" stroke="#000"/><path d="M57 1v7M53 4.500h7M54 2l6 5M60 2l-5 5" stroke="#000" stroke-dasharray="1 1"/><path d="M68.500 2.500h16v13h-16z" fill="#fff" stroke="#000"/><path d="M69 3h15v3H69z" fill="#0058c0"/><path d="M71 8.500h12M71 11h12M71 13.500h12" stroke="#226" stroke-dasharray="2 1"/><path d="M86.500 7h7L90 11z"/></svg>
  </div>
  <div class="flex shrink-0">
    <div class="ml-[3px] w-[759px] h-[581px] bg-white relative flex flex-col font-['Open_Sans',sans-serif] text-[11.500px]">
      <svg class="absolute inset-0 w-[759px] h-[581px]" viewBox="0 0 759 581"><path d="M271.500 0v581M415.500 0v581M535.500 0v581M615.500 0v581" stroke="#e8eef6"/><path d="M131 5.500l3.500-3.500 3.500 3.500" fill="none" stroke="#666"/></svg>
      <div class="flex h-[26px] pt-px items-center pl-[6px] relative"><span class="w-[272px]"><span data-w="32">Name</span></span><span class="w-[144px]"><span data-w="93">Änderungsdatum</span></span><span class="w-[120px]"><span data-w="18">Typ</span></span><span data-w="32">Größe</span></div>
      <div class="ml-[5px] w-[610px] h-[18px] bg-[#cce8ff] border border-dotted border-black flex items-center relative"><svg class="w-[12px] h-[16px] ml-[4px] shrink-0" viewBox="0 0 12 16"><path d="M.5.500h8l3 3v12H.5z" fill="#fff" stroke="#999"/><path d="M8.500 0v3.500H12" fill="none" stroke="#999"/></svg><span class="ml-[4px] w-[252px] shrink-0"><span data-w="38">key.dxf</span></span><span class="w-[144px] shrink-0"><span data-w="85">21.03.2024 11:38</span></span><span class="w-[157px] shrink-0"><span data-w="53">DXF-Datei</span></span><span data-w="29">39 KB</span></div>
    </div>
    <div class="ml-[5px] mt-[2px] w-[330px] flex flex-col">
      <svg class="w-[329px] h-[519px] bg-black" viewBox="0 0 329 519"><g transform="translate(-18,198) scale(.33333)" fill="none" stroke="#fff" stroke-width="3"><path stroke-width="4" d="M58 57h124l3 6 3-6h124v31l11-1h42l8 2 8-2h281l36 2 40-2 30 1 132-1 22 6 15-5 30-1q68 5 75 70v123H682l-26-10-15 40H485l12-30H58z"/><path stroke-width="4" d="M69 68h58v35H69z"/><g font-family="Inter" font-weight="900" font-size="188"><text x="91" y="260" textLength="190" lengthAdjust="spacingAndGlyphs">M</text><text x="286" y="260" textLength="124" lengthAdjust="spacingAndGlyphs">a</text><text x="410" y="260" textLength="126" lengthAdjust="spacingAndGlyphs">r</text><text x="535" y="260" textLength="136" lengthAdjust="spacingAndGlyphs">y</text><text x="664" y="260" textLength="124" lengthAdjust="spacingAndGlyphs">a</text><text x="788" y="260" textLength="221" lengthAdjust="spacingAndGlyphs">m</text></g></g></svg>
      <div class="flex items-center mt-[10px]"><svg class="w-[12px] h-[12px] bg-white" viewBox="0 0 12 12"><path d="M12 .5H.5V12" fill="none" stroke="#555" stroke-width="1.500"/><path d="M3 5.500l2.500 3L9.500 3" fill="none" stroke="#000" stroke-width="2"/></svg><span class="ml-[4px]" data-w="39">Preview</span></div>
    </div>
  </div>
  <div class="flex mt-[4px] h-[24px] items-center pl-[3px]"><span class="w-[80px] -mt-px"><span data-w="54">Dateiname:</span></span><div class="w-[901px] h-[21px] -mt-[2px] bg-white border-t-2 border-l-2 border-t-[#777] border-l-[#777] leading-[18px] pl-px"><span data-w="18">key</span></div>
    <div class="ml-[31px] w-[90px] h-[22px] border border-black flex"><div class="btn w-full relative"><svg class="absolute left-[3px] top-[1px] w-[16px] h-[15px]" viewBox="0 0 16 15"><path d="M1 13V5h4l1 1h5v2" fill="#ffff90" stroke="#000"/><path d="M1 13l3-5h11l-3 5z" fill="#808000" stroke="#000"/><path d="M8 3q3-3 6 1m0-3v3h-3" fill="none" stroke="#000"/></svg><span class="ml-[17px]" data-w="26">Open</span></div></div></div>
  <div class="flex mt-[4px] h-[22px] items-center pl-[3px]"><span class="w-[80px]"><span data-w="41">Dateityp:</span></span><div class="cmb w-[901px] h-[20px]"><span class="ml-px" data-w="79">Supported Files1</span><b class="cmbb"><svg class="w-[8px] h-[5px]"><use href="#tri"/></svg></b></div><div class="btn ml-[31px] w-[90px] h-[22px]"><span data-w="52">Abbrechen</span></div></div>
  <svg class="absolute right-0 bottom-0 w-[12px] h-[12px]" viewBox="0 0 12 12"><path d="M1 12L12 1M5 12l7-7M9 12l3-3" stroke="#999" stroke-width="1.300"/></svg>
</div>

<script>
  // shared widget looks
  const looks = {
    fld: "h-[15px] border-t-2 border-l-2 border-t-[#888] border-l-[#888] border-r border-b border-r-white border-b-white text-[#777] text-[10px] leading-[13px] pl-[3px]",
    fldb: "h-[20px] border-t-2 border-l-2 border-t-[#888] border-l-[#888] border-r border-b border-r-white border-b-white text-[#777] text-[10px] leading-[16px] pl-[3px]",
    sp: "h-[20px] border-t-2 border-l-2 border-t-[#777] border-l-[#777] border-r border-b border-r-white border-b-white text-[#777] pl-[4px] leading-[17px]",
    cb: "block w-[12px] h-[12px] border-t-2 border-l-2 border-t-[#888] border-l-[#888] border-r border-b border-r-white border-b-white",
    btn: "flex items-center justify-center border-t border-l border-t-white border-l-white border-r-2 border-b-2 border-r-[#808080] border-b-[#808080] whitespace-nowrap shrink-0",
    cmb: "flex items-center bg-white border-t-2 border-l-2 border-t-[#777] border-l-[#777] border-r border-b border-r-[#e8e8e8] border-b-[#e8e8e8] pl-px shrink-0",
    cmbb: "ml-auto w-[16px] h-full bg-[#f0f0f0] border-r border-b border-[#777] flex items-center justify-center",
    prow: "flex h-[20px] border-b border-[#e4e4e4] shrink-0",
    plab: "w-[134px] bg-[#dcdcdc] flex justify-end items-center whitespace-nowrap shrink-0",
    pval: "flex items-center pl-[5px] pt-px flex-1"
  };
  for (const k in looks) document.querySelectorAll("." + k).forEach(e => e.className += " " + looks[k]);

  // toolbars: [icon, transform] cells, numbers are separators, "g" a grip
  const cell = (i, t) => i === "BMP"
    ? `<div class="w-[31px] flex justify-center text-[10px] shrink-0 font-['Liberation_Mono',monospace]"><span data-w="16">BMP</span></div>`
    : `<div class="w-[31px] h-[30px] flex items-center justify-center shrink-0"><svg class="w-[28px] h-[28px]" viewBox="0 0 28 28"><use href="#${i}" transform="${t || ""}"/></svg></div>`;
  const sep = w => `<div class="h-full flex justify-center shrink-0" style="width:${w}px"><div class="w-px h-full bg-[#a0a0a0]"></div></div>`;
  const grip = w => `<div class="h-full flex items-center justify-center shrink-0" style="width:${w}px"><div class="h-[24px] border-l-2 border-dotted border-[#b8b8b8]"></div></div>`;
  const build = (id, items) => document.getElementById(id).innerHTML = items.map(x =>
    typeof x === "number" ? sep(x) : Array.isArray(x) ? (x[0] === "g" ? grip(x[1]) : cell(x[0], x[1])) : cell(x)).join("");
  build("bar1", [["g",7],"new","open","save",6,"imp","exp",4,"undo","redo",7,"zfit","zin","zout","zpage","zgrid","zall","zplain",6,"cutbox","wheel","pen",6,"monitor",6,"shapesA","shapes","shapesB",3,["g",6],"proj","ptr","rule",3,["g",6],"curve","BMP","rect","nodes","distA","distB","stamp","list",4]);
  const fy = "matrix(1 0 0 -1 0 28)", r = "rotate(90 14 14)", up = "translate(0 -1)", fx = "matrix(-1 0 0 1 28 -1)";
  build("bar2", [6,["g",6],["al",up],["al",fx],["at",up],["at",fy],["ac",up],["ac",r],5,["sp",up],["sp",r],["same",up],["same",r],["sameb",up],6,["cor",up],["cor",fx],["cor","rotate(180 14 13.5)"],["cor","matrix(1 0 0 -1 0 27)"],["cen",up],6,["edge",up],["edge",fx],["edge","rotate(90 14 13.5)"],["edge","rotate(-90 14 13.5)"],4]);

  // colour palette
  document.getElementById("palette").innerHTML = ["#000","#00f","#f00","#0f0","#fa8072","#ff0","#1e90ff","#8b3610","#808000","#008060","#ff4500","#440080","#ffd0da","#b29ffb","#d5fb9a","#fd8f57","#db7397","#8a72db","#77de77","#b4a074"]
    .map(c => `<div class="w-[25.450px] pt-px shrink-0"><div class="w-[24px] h-[25px] border border-b-0 border-[#a0a0a0]" style="background:${c}"></div></div>`).join("");

  // rulers, grid and work area
  const S = 87.85, X0 = 1257.5, Y0 = 138.6;
  let g = `<rect x="32" y="111" width="1351" height="844" fill="#f0f0f0"/><rect x="33" y="112" width="17" height="843" fill="#fafafa"/><rect x="48" y="112" width="1335" height="17" fill="#fafafa"/>
    <path d="M32.500 111v844M33 129.500h1349" stroke="#888"/><path d="M50.500 112v843" stroke="#888" stroke-width="2"/><path d="M32 111.500h1351" stroke="#777"/><path d="M50.500 130.500h1333" stroke="#555"/>
    <rect x="52.500" y="131.500" width="1312" height="806" fill="#fff" stroke="#000"/>`;
  let t = "", grid = "";
  for (let i = -12; i <= 136; i++) {
    const x = Math.round(X0 - i * S / 10) - .5;
    if (x < 52 || x > 1382) continue;
    t += `M${x} 128V${i % 10 === 0 ? 112 : i % 5 === 0 ? 122 : 125}`;
  }
  for (let i = 0; i <= 92; i++) {
    const y = Math.round(Y0 + i * S / 10) - .5;
    t += `M49 ${y}H${i % 10 === 0 ? 33 : i % 5 === 0 ? 43 : 46}`;
  }
  g += `<path d="${t}" stroke="#000" fill="none"/>`;
  for (let i = 1; i <= 24; i++) grid += `M${Math.round(X0 - i * S / 2) - .5} 141V931`;
  for (let i = 1; i <= 17; i++) grid += `M160 ${Math.round(Y0 + i * S / 2) - .5}H1256`;
  g += `<path d="${grid}" stroke="#a5a596" stroke-dasharray="4 3" fill="none"/><rect x="159" y="138" width="1097" height="790" fill="none" stroke="#000" stroke-width="2"/>`;
  const lab = (s, a, w) => `<text ${a} text-anchor="end" textLength="${w}" lengthAdjust="spacingAndGlyphs" font-size="12.500" font-weight="700" fill="#2c2c2c">${s}</text>`;
  for (let i = -1; i <= 13; i++) { const s = i * 100 + ".0"; g += lab(s, `x="${X0 - i * S}" y="123"`, i < 0 ? 43 : i === 0 ? 20 : i < 10 ? 35 : 43.500); }
  for (let i = 1; i <= 9; i++) g += `<text transform="translate(45 ${Y0 + i * S - .5}) rotate(-90)" textLength="35" lengthAdjust="spacingAndGlyphs" font-size="12.500" font-weight="700" fill="#2c2c2c">${i}00.0</text>`;
  g += `<text transform="translate(45 138) rotate(-90)" font-size="12" font-weight="700" fill="#222">0</text>
    <path d="M1230 138h26M1257 140v26" stroke="#00f" stroke-width="3"/><path d="M1226 138l11-6-2 6 2 6zM1257 171l-6-12 6 2 6-2z" fill="#00f"/><path d="M1254 135h6v6h-6z" fill="#f00"/>
    <rect x="151.500" y="921.500" width="15" height="15" fill="#0f0" stroke="#000"/>
    <rect x="897" y="939" width="17" height="15" fill="#cdcdcd"/>
    <path d="M1370 143l3.500-4 3.500 4M1370 928l3.500 4 3.500-4M62 943l-4 3.500 4 3.500M1355 943l4 3.500-4 3.500" fill="none" stroke="#505050" stroke-width="1.800"/>`;
  document.getElementById("canvas").innerHTML = g;

  const fit = () => document.querySelectorAll("[data-w]").forEach(e => {
    e.style.whiteSpace = "nowrap"; e.style.display = "inline-block"; e.style.flexShrink = "0"; e.style.letterSpacing = "0px";
    const w = e.getBoundingClientRect().width, n = e.textContent.length;
    e.style.letterSpacing = ((+e.dataset.w - w) / n).toFixed(3) + "px";
  });
  fit();
  addEventListener("load", () => { fit(); requestAnimationFrame(fit); document.fonts.ready.then(fit); setTimeout(fit, 60); });
</script>
</body>
</html>
